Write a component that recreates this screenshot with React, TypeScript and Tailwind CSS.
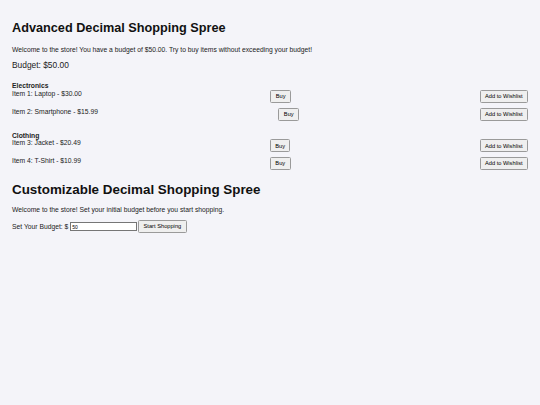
import React from "react";

const btn =
  "bg-[#efefef] border border-[#9a9a9a] rounded-[1.5px] text-[5.7px] leading-[6.5px] px-[4.4px] py-[2.2px] text-black font-['Liberation_Sans',Arial,sans-serif]";

function Row({ label }: { label: string }) {
  return (
    <div className="flex justify-between mb-[5px]">
      <span>{label}</span>
      <button className={btn}>Buy</button>
      <button className={btn}>Add to Wishlist</button>
    </div>
  );
}

export default function App() {
  return (
    <div className="min-h-screen bg-[#f4f4f9] px-[12px] py-[12px] font-['Liberation_Sans',Arial,sans-serif] text-[6.75px] leading-[7.8px] text-[#222]">
      <h1 className="text-[12.7px] leading-[15.5px] font-bold my-[9px] text-[#111]">
        Advanced Decimal Shopping Spree
      </h1>
      <p className="my-[6.75px]">
        Welcome to the store! You have a budget of $50.00. Try to buy items without exceeding your budget!
      </p>
      <p className="text-[8.4px] leading-[9.7px] my-[8px]">Budget: $50.00</p>
      <div className="mb-[11px] mt-[11px]">
        <h3 className="font-bold">Electronics</h3>
        <Row label="Item 1: Laptop - $30.00" />
        <Row label="Item 2: Smartphone - $15.99" />
      </div>
      <div className="mb-[11px]">
        <h3 className="font-bold">Clothing</h3>
        <Row label="Item 3: Jacket - $20.49" />
        <Row label="Item 4: T-Shirt - $10.99" />
      </div>
      <h1 className="text-[13.4px] leading-[15.5px] font-bold mt-[12px] mb-[8px] text-[#111]">
        Customizable Decimal Shopping Spree
      </h1>
      <p className="my-[6.75px]">Welcome to the store! Set your initial budget before you start shopping.</p>
      <div className="flex items-center">
        <span>Set Your Budget: $&nbsp;</span>
        <input
          type="number"
          defaultValue="50"
          className="w-[67px] h-[9px] bg-white border border-[#767676] text-[5px] px-[1px] text-black outline-none"
        />
        <button className={btn + " ml-[1px]"}>Start Shopping</button>
      </div>
    </div>
  );
}
